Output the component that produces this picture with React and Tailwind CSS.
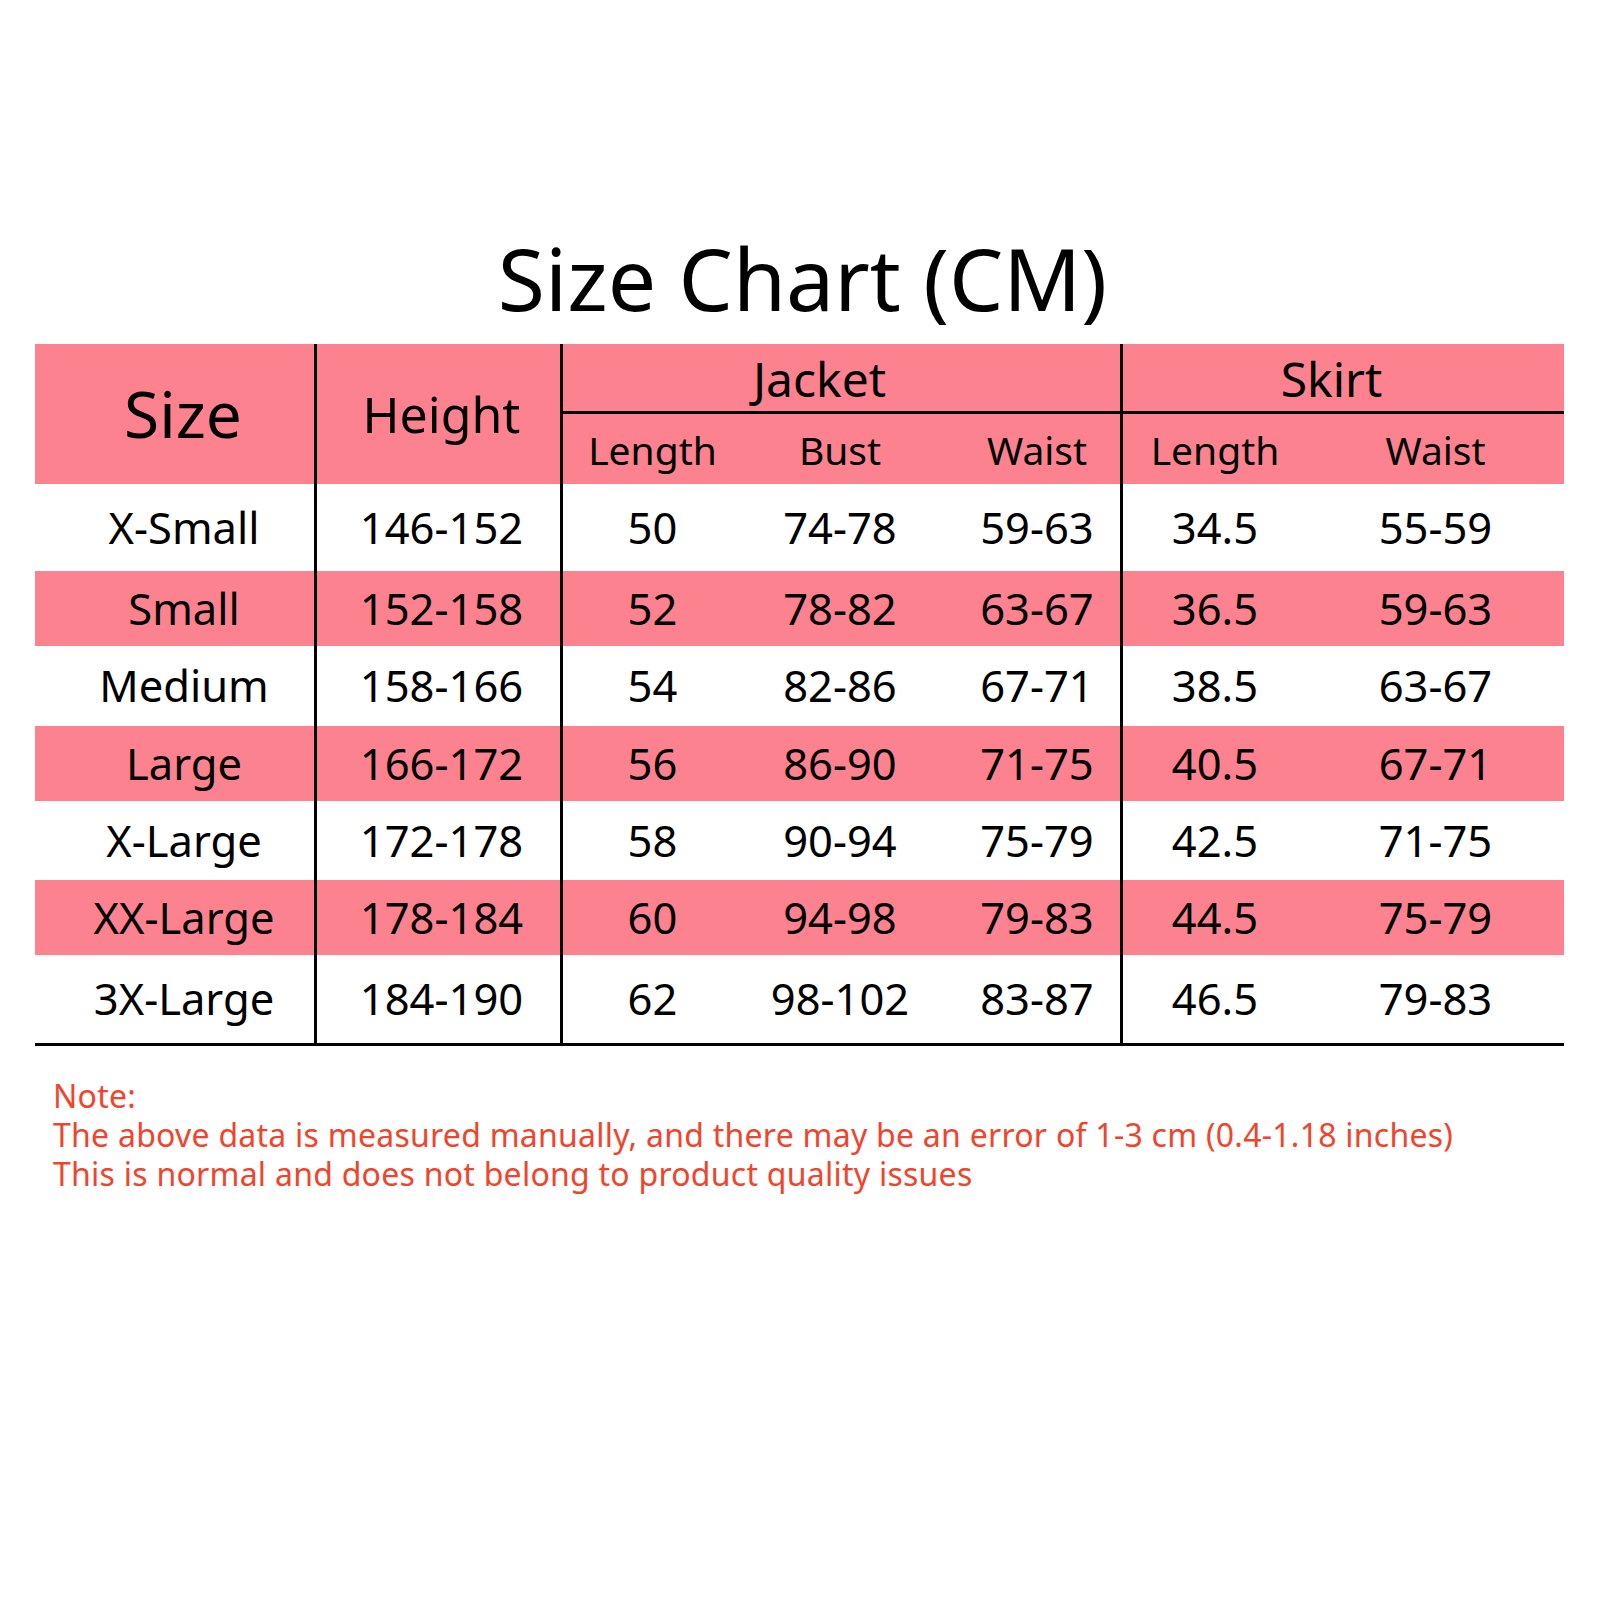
import React from "react";

const rows = [
  { size: "X-Small", h: "146-152", jl: "50", jb: "74-78", jw: "59-63", sl: "34.5", sw: "55-59", cls: "h-[87px] bg-white" },
  { size: "Small", h: "152-158", jl: "52", jb: "78-82", jw: "63-67", sl: "36.5", sw: "59-63", cls: "h-[75px] bg-[#fc828f]" },
  { size: "Medium", h: "158-166", jl: "54", jb: "82-86", jw: "67-71", sl: "38.5", sw: "63-67", cls: "h-[80px] bg-white" },
  { size: "Large", h: "166-172", jl: "56", jb: "86-90", jw: "71-75", sl: "40.5", sw: "67-71", cls: "h-[75px] bg-[#fc828f]" },
  { size: "X-Large", h: "172-178", jl: "58", jb: "90-94", jw: "75-79", sl: "42.5", sw: "71-75", cls: "h-[79px] bg-white" },
  { size: "XX-Large", h: "178-184", jl: "60", jb: "94-98", jw: "79-83", sl: "44.5", sw: "75-79", cls: "h-[75px] bg-[#fc828f]" },
  { size: "3X-Large", h: "184-190", jl: "62", jb: "98-102", jw: "83-87", sl: "46.5", sw: "79-83", cls: "h-[88px] bg-white" },
];

const font = { fontFamily: '"Noto Sans", "Open Sans", sans-serif' };

function Row({ r }) {
  return (
    <div className={`grid grid-cols-[279px_246px_182px_196px_182px_187px_257px] text-[43.5px] leading-none text-black ${r.cls}`}>
      <div className="flex items-center justify-center pl-[19px]">{r.size}</div>
      <div className="flex items-center justify-center border-l-[3px] border-black pl-[6px]">{r.h}</div>
      <div className="flex items-center justify-center border-l-[3px] border-black">{r.jl}</div>
      <div className="flex items-center justify-center">{r.jb}</div>
      <div className="flex items-center justify-center pl-[16px]">{r.jw}</div>
      <div className="flex items-center justify-center border-l-[3px] border-black">{r.sl}</div>
      <div className="flex items-center justify-center">{r.sw}</div>
    </div>
  );
}

export default function App() {
  return (
    <div className="w-[1600px] h-[1600px] bg-white pt-[235px]" style={font}>
      <div className="ml-[35px] w-[1529px]">
        <div className="h-[86px] mb-[23px] text-[86px] leading-none text-black text-center pl-[6px]">
          Size Chart (CM)
        </div>

        {/* header */}
        <div className="grid grid-cols-[279px_246px_182px_196px_182px_187px_257px] grid-rows-[70px_70px] bg-[#fc828f] text-black leading-none">
          <div className="row-span-2 flex items-center justify-center pl-[17px] text-[64px]">Size</div>
          <div className="row-span-2 flex items-center justify-center border-l-[3px] border-black pl-[6px] text-[50px]">Height</div>
          <div className="col-span-3 flex items-center justify-center border-l-[3px] border-b-[3px] border-black pr-[44px] pt-[2px] text-[48px]">Jacket</div>
          <div className="col-span-2 flex items-center justify-center border-l-[3px] border-b-[3px] border-black pr-[24px] pt-[2px] text-[48px]">Skirt</div>
          <div className="flex items-center justify-center border-l-[3px] border-black text-[39px]">Length</div>
          <div className="flex items-center justify-center text-[39px]">Bust</div>
          <div className="flex items-center justify-center pl-[16px] text-[39px]">Waist</div>
          <div className="flex items-center justify-center border-l-[3px] border-black text-[39px]">Length</div>
          <div className="flex items-center justify-center text-[39px]">Waist</div>
        </div>

        {rows.map((r) => (
          <Row key={r.size} r={r} />
        ))}
        <div className="h-[3px] bg-black" />

        <div className="mt-[30px] pl-[18px] text-[32px] leading-[39px] tracking-[0.25px] text-[#f0442c]">
          <div>Note:</div>
          <div>The above data is measured manually, and there may be an error of 1-3 cm (0.4-1.18 inches)</div>
          <div>This is normal and does not belong to product quality issues</div>
        </div>
      </div>
    </div>
  );
}
